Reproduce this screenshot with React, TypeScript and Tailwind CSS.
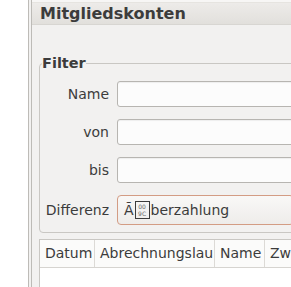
const font = { fontFamily: "'DejaVu Sans', 'Noto Sans', sans-serif" };

const FilterRow = ({ label, children }: { label: string; children: React.ReactNode }) => (
  <div className="flex items-center">
    <div className="w-[77px] shrink-0 pr-[8px] text-right text-[14px] text-[#3c3c3c]">{label}</div>
    {children}
  </div>
);

const TextInput = () => (
  <div className="h-[26px] flex-1 rounded-[3px] border border-[#b7b5b1] bg-[#fcfcfc] shadow-[inset_0_1px_1px_rgba(0,0,0,0.06)]" />
);

export default function App() {
  return (
    <div className="flex h-[287px] w-[291px] overflow-hidden bg-white" style={font}>
      <div className="w-[28px] shrink-0 bg-white" />
      <div className="w-[4px] shrink-0 border-x border-[#bdbbb7] bg-[#f2f1f0]" />
      <div className="flex min-w-0 flex-1 flex-col overflow-hidden bg-[#f2f1f0]">
        <div className="h-[3px] shrink-0 border-b border-[#e6e4e0] bg-[#f7f6f5]" />
        <div className="flex h-[22px] shrink-0 items-center overflow-hidden whitespace-nowrap border-b border-[#d8d6d2] bg-gradient-to-b from-[#edebe9] to-[#e2e0dc] pl-[8px] text-[16px] font-bold text-[#3c3c3c]">
          Mitgliedskonten
        </div>
        <div className="flex min-h-0 flex-1 flex-col pl-[7px] pt-[31px]">
          <fieldset className="-mr-[4px] shrink-0 rounded-[4px] border border-[#c9c7c3] pb-[7px] pt-[10px]">
            <legend className="ml-[2px] px-0 text-[14.5px] font-bold leading-[15px] text-[#3c3c3c]">Filter</legend>
            <div className="flex flex-col gap-[12px]">
              <FilterRow label="Name">
                <TextInput />
              </FilterRow>
              <FilterRow label="von">
                <TextInput />
              </FilterRow>
              <FilterRow label="bis">
                <TextInput />
              </FilterRow>
              <FilterRow label="Differenz">
                <div className="flex h-[30px] flex-1 items-center overflow-hidden whitespace-nowrap rounded-[4px] border border-[#d39c84] bg-gradient-to-b from-[#f9f8f7] to-[#eeecea] pl-[6px] text-[14px] text-[#3c3c3c]">
                  <span>Ã</span>
                  <span className="mx-[1px] flex h-[18px] w-[15px] shrink-0 flex-col items-center justify-center border border-[#3c3c3c] text-[6px] leading-[7px] text-[#6a6a6a]">
                    <span>00</span>
                    <span>9C</span>
                  </span>
                  <span>berzahlung</span>
                </div>
              </FilterRow>
            </div>
          </fieldset>
          <div className="mt-[6px] flex min-h-[50px] flex-1 flex-col border-l border-t border-[#c9c7c3] bg-white">
            <div className="flex h-[28px] shrink-0 border-b border-[#d6d4d0] bg-[#fbfbfa] text-[14px] text-[#3c3c3c]">
              <div className="flex w-[55px] shrink-0 items-center overflow-hidden whitespace-nowrap border-r border-[#dcdad6] pl-[5px]">Datum</div>
              <div className="flex w-[120px] shrink-0 items-center overflow-hidden whitespace-nowrap border-r border-[#dcdad6] pl-[5px]">Abrechnungslau</div>
              <div className="flex w-[50px] shrink-0 items-center overflow-hidden whitespace-nowrap border-r border-[#dcdad6] pl-[5px]">Name</div>
              <div className="flex min-w-0 items-center overflow-hidden whitespace-nowrap pl-[5px]">Zw</div>
            </div>
            <div className="flex-1 bg-white" />
          </div>
        </div>
      </div>
    </div>
  );
}
